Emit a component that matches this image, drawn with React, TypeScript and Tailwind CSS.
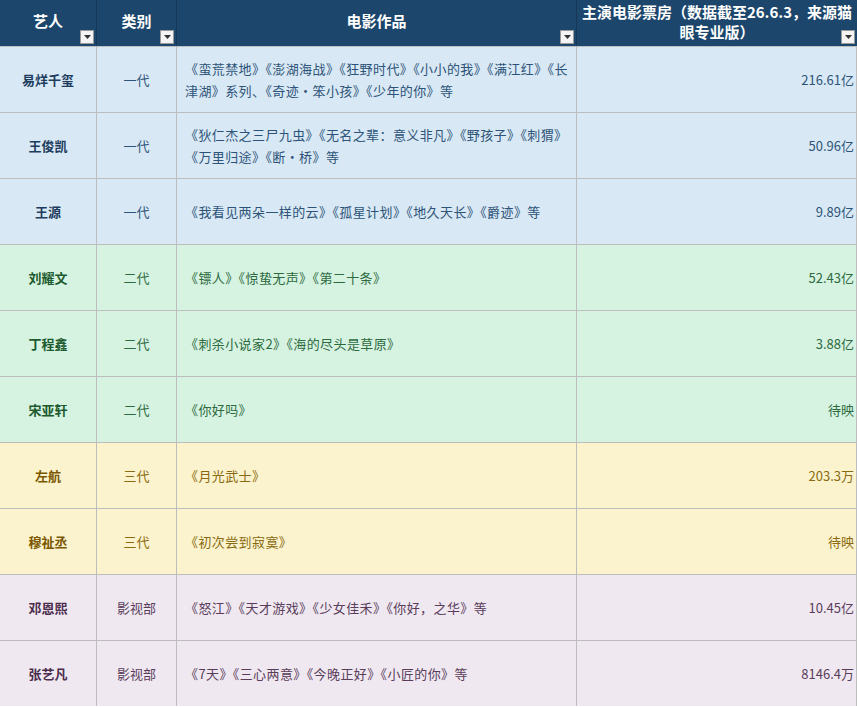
const F = { fontFamily: '"Noto Sans CJK SC", "Liberation Sans", sans-serif' };

type Row = { name: string; gen: string; films: string; box: string; t: "b" | "g" | "y" | "p" };

const rows: Row[] = [
  { name: "易烊千玺", gen: "一代", films: "《蛮荒禁地》《澎湖海战》《狂野时代》《小小的我》《满江红》《长津湖》系列、《奇迹·笨小孩》《少年的你》等", box: "216.61亿", t: "b" },
  { name: "王俊凯", gen: "一代", films: "《狄仁杰之三尸九虫》《无名之辈：意义非凡》《野孩子》《刺猬》《万里归途》《断·桥》等", box: "50.96亿", t: "b" },
  { name: "王源", gen: "一代", films: "《我看见两朵一样的云》《孤星计划》《地久天长》《爵迹》等", box: "9.89亿", t: "b" },
  { name: "刘耀文", gen: "二代", films: "《镖人》《惊蛰无声》《第二十条》", box: "52.43亿", t: "g" },
  { name: "丁程鑫", gen: "二代", films: "《刺杀小说家2》《海的尽头是草原》", box: "3.88亿", t: "g" },
  { name: "宋亚轩", gen: "二代", films: "《你好吗》", box: "待映", t: "g" },
  { name: "左航", gen: "三代", films: "《月光武士》", box: "203.3万", t: "y" },
  { name: "穆祉丞", gen: "三代", films: "《初次尝到寂寞》", box: "待映", t: "y" },
  { name: "邓恩熙", gen: "影视部", films: "《怒江》《天才游戏》《少女佳禾》《你好，之华》等", box: "10.45亿", t: "p" },
  { name: "张艺凡", gen: "影视部", films: "《7天》《三心两意》《今晚正好》《小匠的你》等", box: "8146.4万", t: "p" },
];

const theme = {
  b: { bg: "bg-[#d8e9f5]", name: "text-[#1d3c5e]", body: "text-[#2e5378]" },
  g: { bg: "bg-[#d6f3e2]", name: "text-[#1d5a2e]", body: "text-[#2d6a3e]" },
  y: { bg: "bg-[#fbf3cd]", name: "text-[#7a5700]", body: "text-[#8a6a10]" },
  p: { bg: "bg-[#efe8f1]", name: "text-[#4b2b4b]", body: "text-[#5a3d5a]" },
};

function Drop() {
  return (
    <span className="absolute bottom-[2px] right-[2px] flex h-[14px] w-[14px] items-center justify-center bg-[#f4f4f4] border border-[#999]">
      <svg width="7" height="4" viewBox="0 0 7 4"><path d="M0 0h7L3.5 4z" fill="#333" /></svg>
    </span>
  );
}

export default function App() {
  return (
    <div style={F} className="w-[857px] h-[707px] overflow-hidden bg-white">
      <div className="grid grid-cols-[97px_80px_400px_280px] grid-rows-[46px_repeat(10,66px)]">
        {["艺人", "类别", "电影作品"].map((h) => (
          <div key={h} className="relative flex items-start justify-center bg-[#1c466b] pt-[10px] text-[15px] font-bold text-white border-r border-[#16395a]">
            {h}
            <Drop />
          </div>
        ))}
        <div className="relative bg-[#1c466b] px-1 pt-[2px] text-center text-[15px] font-bold leading-[20px] text-white">
          主演电影票房（数据截至26.6.3，来源猫眼专业版）
          <Drop />
        </div>
        {rows.map((r) => {
          const th = theme[r.t];
          const cell = `${th.bg} border-t border-r border-[#bdbdbd] flex items-center text-[13px]`;
          return [
            <div key={r.name + 1} className={`${cell} ${th.name} justify-center font-bold`}>{r.name}</div>,
            <div key={r.name + 2} className={`${cell} ${th.body} justify-center`}>{r.gen}</div>,
            <div key={r.name + 3} className={`${cell} ${th.body} px-[8px] leading-[22px] tracking-[0.4px]`}>{r.films}</div>,
            <div key={r.name + 4} className={`${cell} ${th.body} justify-end pr-[2px]`}>{r.box}</div>,
          ];
        })}
      </div>
    </div>
  );
}
